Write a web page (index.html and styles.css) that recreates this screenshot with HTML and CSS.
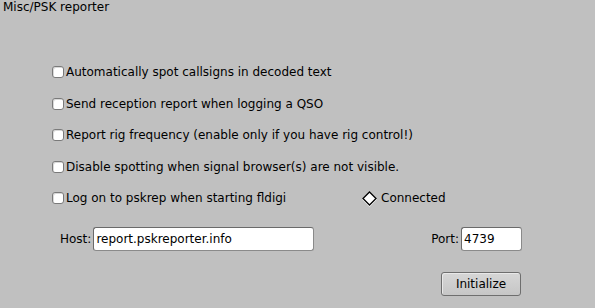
FILE: index.html
```html
<!DOCTYPE html>
<html lang="en">
<head>
    <meta charset="UTF-8">
    <title>Misc/PSK reporter</title>
    <link rel="stylesheet" href="styles.css">
</head>
<body>
    <div class="panel">
        <div class="title">Misc/PSK reporter</div>

        <div class="options">
            <label class="check"><span class="box"></span>Automatically spot callsigns in decoded text</label>
            <label class="check"><span class="box"></span>Send reception report when logging a QSO</label>
            <label class="check"><span class="box"></span>Report rig frequency (enable only if you have rig control!)</label>
            <label class="check"><span class="box"></span>Disable spotting when signal browser(s) are not visible.</label>
            <div class="row">
                <label class="check wide"><span class="box"></span>Log on to pskrep when starting fldigi</label>
                <span class="status">
                    <svg class="diamond" width="15" height="15" viewBox="0 0 15 15">
                        <polygon points="7.5,1 14,7.5 7.5,14 1,7.5" fill="#fff" stroke="#000" stroke-width="1.3"/>
                    </svg>
                    Connected
                </span>
            </div>
        </div>

        <div class="server">
            <label class="field host">Host:<input type="text" value="report.pskreporter.info"></label>
            <label class="field port">Port:<input type="text" value="4739"></label>
        </div>

        <div class="actions">
            <button class="btn">Initialize</button>
        </div>
    </div>
</body>
</html>
```

FILE: styles.css
```css
* {
    margin: 0;
    padding: 0;
    box-sizing: border-box;
}

body {
    background: #c0c0c0;
    font-family: 'DejaVu Sans', Verdana, sans-serif;
    font-size: 12px;
    color: #000;
}

.panel {
    width: 595px;
    height: 308px;
}

.title {
    padding-left: 3px;
    height: 16px;
    line-height: 14px;
}

.options {
    display: flex;
    flex-direction: column;
    gap: 11.5px;
    padding: 46px 0 0 52px;
}

.check {
    display: flex;
    align-items: center;
    height: 20px;
}

.box {
    width: 12px;
    height: 12px;
    margin-right: 2px;
    background: #fff;
    border: 1px solid #7a7a7a;
    border-radius: 3px;
    box-shadow: inset 1px 1px 0 #d8d8d8;
}

.row {
    display: flex;
    align-items: center;
}

.wide {
    width: 310px;
}

.status {
    display: flex;
    align-items: center;
    gap: 4px;
}

.diamond {
    filter: drop-shadow(0 1px 0 #f4f4f4);
}

.server {
    display: flex;
    align-items: center;
    margin-top: 19px;
    padding: 0 73px 0 60px;
}

.field {
    display: flex;
    align-items: center;
    gap: 2px;
}

.port {
    margin-left: auto;
}

.field input {
    height: 24px;
    padding: 0 2px;
    font: inherit;
    color: #000;
    background: #fff;
    border: 1px solid #8a8a8a;
    border-top-color: #6a6a6a;
    border-left-color: #6a6a6a;
    border-radius: 3px;
    outline: none;
}

.host input {
    width: 221px;
}

.port input {
    width: 61px;
}

.actions {
    display: flex;
    justify-content: flex-end;
    padding-right: 74px;
    margin-top: 21px;
}

.btn {
    width: 80px;
    height: 24px;
    font: inherit;
    color: #000;
    background: linear-gradient(#d6d6d6, #c6c6c6);
    border: 1px solid #6e6e6e;
    border-radius: 3px;
    box-shadow: inset 1px 1px 0 #e8e8e8;
}
```
